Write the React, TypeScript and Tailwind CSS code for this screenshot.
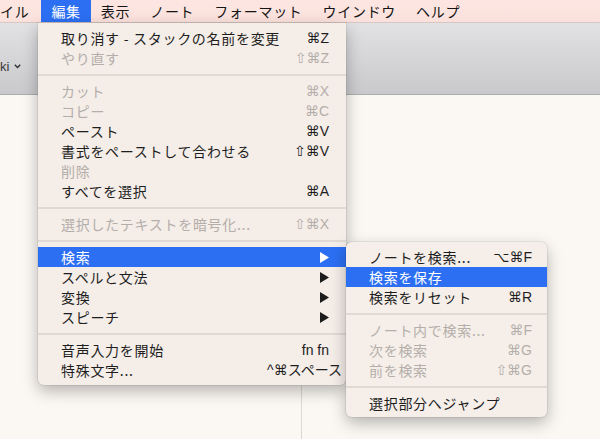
import React from "react";

const JP = "font-['Noto_Sans_CJK_JP','Noto_Sans',sans-serif]";
const KEY = "font-['Liberation_Sans','DejaVu_Sans','Noto_Sans_CJK_JP',sans-serif]";

type Row =
  | { sep: true }
  | { sep?: false; label: string; key?: string; off?: boolean; sub?: boolean; hi?: boolean; wide?: boolean };

const MENU_BAR = ["編集", "表示", "ノート", "フォーマット", "ウインドウ", "ヘルプ"];

const EDIT: Row[] = [
  { label: "取り消す - スタックの名前を変更", key: "⌘Z" },
  { label: "やり直す", key: "⇧⌘Z", off: true },
  { sep: true },
  { label: "カット", key: "⌘X", off: true },
  { label: "コピー", key: "⌘C", off: true },
  { label: "ペースト", key: "⌘V" },
  { label: "書式をペーストして合わせる", key: "⇧⌘V" },
  { label: "削除", off: true },
  { label: "すべてを選択", key: "⌘A" },
  { sep: true },
  { label: "選択したテキストを暗号化...", key: "⇧⌘X", off: true },
  { sep: true },
  { label: "検索", sub: true, hi: true },
  { label: "スペルと文法", sub: true },
  { label: "変換", sub: true },
  { label: "スピーチ", sub: true },
  { sep: true },
  { label: "音声入力を開始", key: "fn fn" },
  { label: "特殊文字...", key: "^⌘スペース", wide: true },
];

const FIND: Row[] = [
  { label: "ノートを検索...", key: "⌥⌘F" },
  { label: "検索を保存", hi: true },
  { label: "検索をリセット", key: "⌘R" },
  { sep: true },
  { label: "ノート内で検索...", key: "⌘F", off: true },
  { label: "次を検索", key: "⌘G", off: true },
  { label: "前を検索", key: "⇧⌘G", off: true },
  { sep: true },
  { label: "選択部分へジャンプ" },
];

function Arrow({ white }: { white?: boolean }) {
  return (
    <svg width="9" height="11" viewBox="0 0 9 11">
      <polygon points="0,0 9,5.5 0,11" fill={white ? "#fff" : "#1c1c1c"} />
    </svg>
  );
}

function MenuRows({ rows, pl, pr }: { rows: Row[]; pl: string; pr: string }) {
  return (
    <>
      {rows.map((r, i) => {
        if (r.sep) {
          return (
            <div key={i} className="h-[13px] flex items-center">
              <div className="h-[2px] w-full bg-[#e1d9d4]" />
            </div>
          );
        }
        const color = r.hi ? "text-white" : r.off ? "text-[#b4aeaa]" : "text-[#1e1e1e]";
        return (
          <div
            key={i}
            className={`h-[20px] flex items-center justify-between ${pl} ${pr} ${r.hi ? "bg-[#2c6ff3]" : ""} ${color}`}
          >
            <span className={`${JP} text-[14px] tracking-[0.7px] leading-[20px] whitespace-nowrap`}>{r.label}</span>
            {r.sub && <Arrow white={r.hi} />}
            {r.key && (
              <span
                className={`${KEY} text-[14px] leading-[20px] whitespace-nowrap ${r.wide ? "mr-[-13px]" : ""}`}
              >
                {r.key}
              </span>
            )}
          </div>
        );
      })}
    </>
  );
}

export default function App() {
  return (
    <div className="relative w-[600px] h-[439px] overflow-hidden flex flex-col bg-[#faf6f1]">
      {/* menu bar */}
      <div className={`h-[23px] shrink-0 flex items-stretch bg-gradient-to-b from-[#fde6e2] to-[#fbe1dc] border-b border-[#dccac6] ${JP} text-[14px] tracking-[0.7px] text-[#151515]`}>
        <div className="pr-[12px] flex items-center">イル</div>
        {MENU_BAR.map((m, i) => (
          <div key={m} className={`px-[10px] flex items-center ${i === 0 ? "bg-[#2c6ff3] text-white" : ""}`}>
            {m}
          </div>
        ))}
      </div>

      {/* window toolbar */}
      <div className="h-[72px] shrink-0 flex items-end pb-[18px] bg-gradient-to-b from-[#e2e1e3] to-[#c9c8cb] border-b border-[#adacae] shadow-[0_2px_4px_rgba(0,0,0,0.12)]">
        <div className="flex items-center gap-[5px] text-[13px] text-[#3a3a3a] font-['Liberation_Sans',sans-serif]">
          <span>ki</span>
          <svg width="7" height="5" viewBox="0 0 7 5">
            <path d="M0.8 0.8 L3.5 3.6 L6.2 0.8" stroke="#333" strokeWidth="1.4" fill="none" />
          </svg>
        </div>
      </div>

      {/* content */}
      <div className="flex-1 flex">
        <div className="w-[302px] border-r border-[#dcd7d2] bg-[#fbf7f3]" />
        <div className="flex-1 bg-[#fbf8f3]" />
      </div>

      {/* edit menu */}
      <div className="absolute left-[38px] top-[23px] w-[308px] pt-[5px] pb-[5px] rounded-b-[6px] bg-[#f4ede8] shadow-[0_6px_16px_rgba(0,0,0,0.28),0_0_0_1px_rgba(0,0,0,0.06)]">
        <MenuRows rows={EDIT} pl="pl-[23px]" pr="pr-[17px]" />
      </div>

      {/* find submenu */}
      <div className="absolute left-[346px] top-[242px] w-[201px] pt-[5px] pb-[4px] rounded-[6px] bg-[#f5eee9] shadow-[0_6px_16px_rgba(0,0,0,0.28),0_0_0_1px_rgba(0,0,0,0.06)]">
        <MenuRows rows={FIND} pl="pl-[23px]" pr="pr-[15px]" />
      </div>
    </div>
  );
}
